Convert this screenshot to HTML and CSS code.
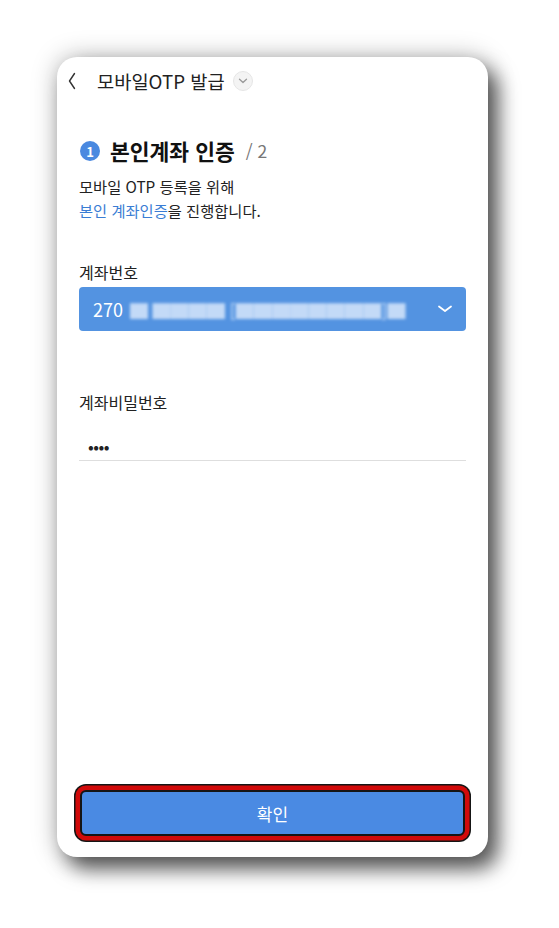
FILE: index.html
```html
<!DOCTYPE html>
<html lang="ko">
<head>
<meta charset="utf-8">
<title>모바일OTP 발급</title>
<link rel="stylesheet" href="styles.css">
</head>
<body>
<div class="card">
  <header class="header">
    <svg class="back" width="10" height="18" viewBox="0 0 10 18"><path d="M7.5 1.5 L2.5 9 L7.5 16.5" fill="none" stroke="#333" stroke-width="1.4" stroke-linecap="round" stroke-linejoin="round"/></svg>
    <h1 class="title">모바일OTP 발급</h1>
    <span class="title-drop"><svg width="10" height="6" viewBox="0 0 10 6"><path d="M1.5 1.2 L5 4.5 L8.5 1.2" fill="none" stroke="#9a9a9a" stroke-width="1.3" stroke-linecap="round" stroke-linejoin="round"/></svg></span>
  </header>
  <main class="main">
    <div class="step">
      <span class="step-num">1</span>
      <span class="step-title">본인계좌 인증</span>
      <span class="step-total">/ 2</span>
    </div>
    <p class="desc">모바일 OTP 등록을 위해<br><span class="link">본인 계좌인증</span>을 진행합니다.</p>
    <div class="label first">계좌번호</div>
    <div class="select">
      <span class="acct">270<span class="blur">▇ ▇▇▇▇ [▇▇▇▇▇▇▇▇]▇</span></span>
      <svg class="sel-chev" width="16" height="8" viewBox="0 0 16 8"><path d="M2 1.5 L8 6 L14 1.5" fill="none" stroke="#fff" stroke-width="1.8" stroke-linecap="round" stroke-linejoin="round"/></svg>
    </div>
    <div class="label second">계좌비밀번호</div>
    <div class="pw"><span class="dots">••••</span></div>
  </main>
  <footer class="footer">
    <button class="confirm" type="button">확인</button>
  </footer>
</div>
</body>
</html>
```
FILE: styles.css
```css
html, body {
  margin: 0;
  padding: 0;
  background: #ffffff;
}
body {
  width: 559px;
  height: 928px;
  overflow: hidden;
  font-family: "Noto Sans CJK KR", "Noto Sans", sans-serif;
  color: #222;
}
.card {
  margin: 57px 0 0 57px;
  width: 431px;
  height: 800px;
  background: #fff;
  border-radius: 20px;
  box-shadow: 0 0 26px rgba(0,0,0,0.28), 10px 12px 20px rgba(0,0,0,0.62);
  display: flex;
  flex-direction: column;
}
.header {
  height: 48px;
  display: flex;
  align-items: center;
  padding-left: 10px;
}
.back {
  display: block;
  margin-top: -1px;
}
.title {
  margin: 0 0 0 20px;
  font-size: 18.7px;
  font-weight: 400;
  color: #222;
  line-height: 24px;
}
.title-drop {
  margin-left: 8px;
  width: 18px;
  height: 18px;
  border-radius: 50%;
  background: #f4f4f4;
  border: 1px solid #e6e6e6;
  display: flex;
  align-items: center;
  justify-content: center;
}
.main {
  padding: 0 22px;
}
.step {
  margin-top: 32px;
  height: 28px;
  display: flex;
  align-items: center;
}
.step-num {
  width: 20px;
  height: 20px;
  border-radius: 50%;
  background: #4a89e0;
  color: #fff;
  font-size: 13px;
  font-weight: 700;
  display: flex;
  align-items: center;
  justify-content: center;
  line-height: 1;
  margin-left: 1px;
}
.step-title {
  margin-left: 10px;
  font-size: 21.5px;
  font-weight: 700;
  color: #111;
  line-height: 28px;
}
.step-total {
  margin-left: 11px;
  font-size: 17.5px;
  color: #777;
  line-height: 28px;
}
.desc {
  margin: 9px 0 0 0;
  font-size: 15.3px;
  line-height: 24px;
  color: #222;
}
.link {
  color: #3a7dd4;
}
.label {
  font-size: 16px;
  line-height: 22px;
  color: #222;
}
.label.first {
  margin-top: 39px;
}
.label.second {
  margin-top: 60px;
}
.select {
  margin-top: 4px;
  height: 44px;
  border-radius: 4px;
  background: #5393e1;
  display: flex;
  align-items: center;
  justify-content: space-between;
  padding: 0 13px 0 14px;
}
.acct {
  color: #fff;
  font-size: 18px;
  white-space: nowrap;
}
.blur {
  margin-left: 7px;
  color: rgba(215,230,250,0.85);
  filter: blur(1.5px);
  font-size: 18px;
  letter-spacing: 0.2px;
}
.sel-chev {
  display: block;
  flex: none;
}
.pw {
  padding: 23px 0 4px 9px;
  border-bottom: 1px solid #dedede;
}
.dots {
  display: block;
  font-size: 17px;
  line-height: 20px;
  letter-spacing: -0.5px;
  color: #222;
}
.footer {
  margin-top: auto;
  padding: 0 23px 21px;
}
.confirm {
  display: block;
  width: 385px;
  height: 46px;
  border: 2px solid #151515;
  border-radius: 6px;
  background: #4a8ae3;
  color: #fff;
  font-family: "Noto Sans CJK KR", "Noto Sans", sans-serif;
  font-size: 17px;
  box-shadow: 0 0 0 4.5px #d10a0a, 0 0 0 6px #151515;
  padding: 0;
}
```
